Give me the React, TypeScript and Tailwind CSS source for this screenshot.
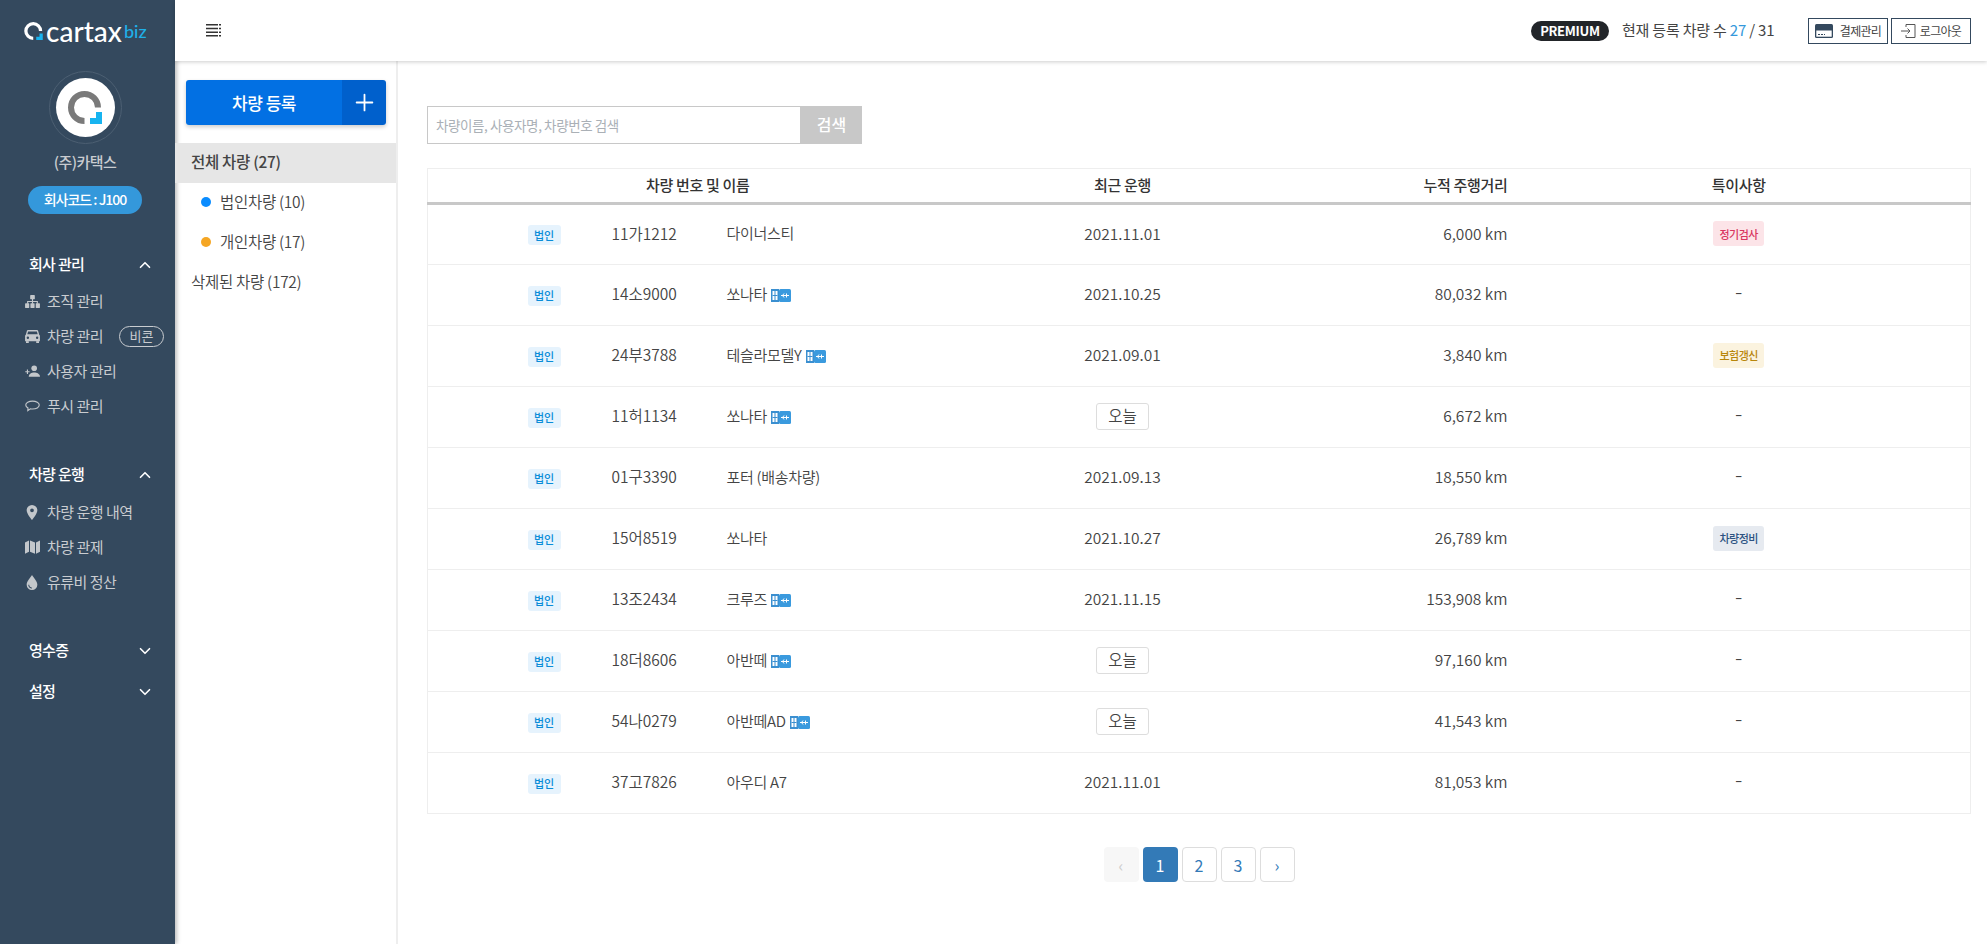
import type { ReactNode } from "react";
import { ChevronDown, ChevronUp, Plus } from "lucide-react";

const font = "font-['Noto_Sans_CJK_KR','Noto_Sans',sans-serif]";

interface Vehicle {
  plate: string;
  name: string;
  ev: boolean;
  date: string;
  km: string;
  note?: "inspect" | "insure" | "repair";
}

const vehicles: Vehicle[] = [
  { plate: "11가1212", name: "다이너스티", ev: false, date: "2021.11.01", km: "6,000 km", note: "inspect" },
  { plate: "14소9000", name: "쏘나타", ev: true, date: "2021.10.25", km: "80,032 km" },
  { plate: "24부3788", name: "테슬라모델Y", ev: true, date: "2021.09.01", km: "3,840 km", note: "insure" },
  { plate: "11허1134", name: "쏘나타", ev: true, date: "오늘", km: "6,672 km" },
  { plate: "01구3390", name: "포터 (배송차량)", ev: false, date: "2021.09.13", km: "18,550 km" },
  { plate: "15어8519", name: "쏘나타", ev: false, date: "2021.10.27", km: "26,789 km", note: "repair" },
  { plate: "13조2434", name: "크루즈", ev: true, date: "2021.11.15", km: "153,908 km" },
  { plate: "18더8606", name: "아반떼", ev: true, date: "오늘", km: "97,160 km" },
  { plate: "54나0279", name: "아반떼AD", ev: true, date: "오늘", km: "41,543 km" },
  { plate: "37고7826", name: "아우디 A7", ev: false, date: "2021.11.01", km: "81,053 km" },
];

function LogoMark({ className, ring }: { className: string; ring: string }) {
  return (
    <svg viewBox="0 0 34 33" className={className}>
      <path d="M30 16.5A13.5 13.5 0 1 0 16.500 30" fill="none" stroke={ring} strokeWidth="6" />
      <path d="M28 21h6v12H22v-6h6z" fill="#17b4f0" />
    </svg>
  );
}

function EvIcon() {
  return (
    <svg viewBox="0 0 20 13" className="ml-[4px] inline-block h-[13px] w-[20px] align-[-2px]">
      <rect x="0" y="0" width="8" height="13" fill="#3a8fd0" />
      <rect x="1.500" y="2" width="5" height="9" fill="#fff" />
      <path d="M1.500 6.500h5M4 2v9" stroke="#3a8fd0" strokeWidth="1" />
      <rect x="8" y="0" width="12" height="13" rx="1.500" fill="#3a9ade" />
      <path d="M10 6.500h8M13 4.500l-1.500 2 1.500 2M15.500 4.500v4" stroke="#fff" strokeWidth="1" fill="none" />
    </svg>
  );
}

const orgIcon = (
  <svg viewBox="0 0 16 14" className="h-[13px] w-[15px]" fill="#c3c7cb">
    <rect x="5.500" y="0" width="5" height="4.500" rx="0.500" />
    <rect x="0" y="9" width="4.500" height="5" rx="0.500" />
    <rect x="5.750" y="9" width="4.500" height="5" rx="0.500" />
    <rect x="11.500" y="9" width="4.500" height="5" rx="0.500" />
    <path d="M7.400 4h1.200v2.400h5.200v3h-1.200V7.600H8.600v1.800H7.400V7.600H3.400v1.800H2.200v-3h5.200z" />
  </svg>
);

const carIcon = (
  <svg viewBox="0 0 16 14" className="h-[13px] w-[15px]" fill="#c3c7cb">
    <path
      d="M3.200 0h9.600c.6 0 1 .3 1.200.9L15.200 5c.5.3.8.8.8 1.400V12H0V6.400C0 5.800.3 5.300.8 5L2 .9C2.200.3 2.600 0 3.200 0zM3.300 1.500 2.400 4.700h11.200l-.9-3.200zM3 7a1.300 1.300 0 1 0 0 2.600A1.300 1.300 0 0 0 3 7zm10 0a1.300 1.300 0 1 0 0 2.600A1.300 1.300 0 0 0 13 7z"
      fillRule="evenodd"
    />
    <rect x="1" y="12" width="3" height="2" />
    <rect x="12" y="12" width="3" height="2" />
  </svg>
);

const userIcon = (
  <svg viewBox="0 0 16 12" className="h-[12px] w-[15px]" fill="#c3c7cb">
    <circle cx="9.800" cy="3" r="3" />
    <path d="M4 12c0-2.800 3-4.400 5.800-4.400S16 9.200 16 12z" />
    <path d="M2 4.500h1.200v1.700h1.700v1.200H3.200v1.700H2V7.400H.3V6.200H2z" />
  </svg>
);

const chatIcon = (
  <svg viewBox="0 0 16 12" className="h-[12px] w-[15px]" fill="none" stroke="#c3c7cb" strokeWidth="1.200">
    <path d="M8 .8c4 0 7.200 1.700 7.200 4.200S12 9.200 8 9.200c-.8 0-1.500 0-2.200-.2L3 11l.2-2.900C1.700 7.400.8 6.300.8 5 .8 2.500 4 .8 8 .8z" />
  </svg>
);

const pinIcon = (
  <svg viewBox="0 0 12 16" className="h-[15px] w-[12px]" fill="#c3c7cb">
    <path
      d="M6 0a5.700 5.700 0 0 0-5.700 5.700C.3 9.700 6 16 6 16s5.700-6.300 5.700-10.300A5.700 5.700 0 0 0 6 0zm0 7.700a2 2 0 1 1 0-4 2 2 0 0 1 0 4z"
      fillRule="evenodd"
    />
  </svg>
);

const mapIcon = (
  <svg viewBox="0 0 15 14" className="h-[14px] w-[15px]" fill="#c3c7cb">
    <path d="M0 2.500 4 .5v11.200l-4 2zM5 .5l5 2v11.200l-5-2zM11 2.500l4-2v11.200l-4 2z" />
  </svg>
);

const dropIcon = (
  <svg viewBox="0 0 12 16" className="h-[15px] w-[12px]" fill="#c3c7cb">
    <path
      d="M6 0C4.500 2.800.3 6.300.3 10.300a5.700 5.700 0 0 0 11.400 0C11.700 6.300 7.500 2.800 6 0zM3 10.500c0 1.700 1.300 3 3 3v1c-2.300 0-4-1.800-4-4z"
      fillRule="evenodd"
    />
  </svg>
);

function NavGroup({ title, open }: { title: string; open: boolean }) {
  return (
    <div className="flex h-[20px] items-center justify-between pl-[29px] pr-[21px] text-[15px] font-medium text-white">
      <span className="tracking-[-0.7px]">{title}</span>
      {open ? <ChevronUp size={18} strokeWidth={2.200} /> : <ChevronDown size={18} strokeWidth={2.200} />}
    </div>
  );
}

function NavItem({ icon, label, children }: { icon: ReactNode; label: string; children?: ReactNode }) {
  return (
    <div className="flex h-[35px] items-center text-[15px] text-[#c9ccd0]">
      <span className="flex w-[47px] justify-center pl-[17px]">{icon}</span>
      <span className="tracking-[-0.5px]">{label}</span>
      {children}
    </div>
  );
}

function Sidebar() {
  return (
    <aside className="flex w-[175px] shrink-0 flex-col bg-[#34495e] shadow-[2px_0_4px_rgba(0,0,0,0.25)]">
      <div className="flex h-[61px] items-center pl-[24px]">
        <LogoMark className="h-[18px] w-[19px]" ring="#ffffff" />
        <span className="ml-[3px] font-['Lato',sans-serif] text-[28px] leading-none font-medium text-white">cartax</span>
        <span className="ml-[2px] font-['Lato',sans-serif] text-[18px] leading-none font-medium text-[#1fb0e8]">biz</span>
      </div>
      <div className="mt-[10px] flex flex-col items-center pr-[5px]">
        <div className="flex h-[73px] w-[73px] items-center justify-center rounded-full border border-[#4c5f72]">
          <div className="flex h-[59px] w-[59px] items-center justify-center rounded-full bg-white">
            <LogoMark className="h-[33px] w-[34px]" ring="#7a7a7a" />
          </div>
        </div>
        <div className="mt-[7px] text-[15px] font-medium tracking-[-0.6px] text-[#c9ccd0]">(주)카택스</div>
        <div className="mt-[12px] flex h-[28px] w-[114px] items-center justify-center rounded-full bg-[#3498db] text-[14px] font-medium tracking-[-1px] text-white">
          회사코드 : J100
        </div>
      </div>
      <div className="mt-[41px]">
        <NavGroup title="회사 관리" open />
        <div className="mt-[9px]">
          <NavItem icon={orgIcon} label="조직 관리" />
          <NavItem icon={carIcon} label="차량 관리">
            <span className="ml-[16px] flex h-[21px] w-[45px] items-center justify-center rounded-full border border-[#c9ccd0] text-[13px]">비콘</span>
          </NavItem>
          <NavItem icon={userIcon} label="사용자 관리" />
          <NavItem icon={chatIcon} label="푸시 관리" />
        </div>
      </div>
      <div className="mt-[41px]">
        <NavGroup title="차량 운행" open />
        <div className="mt-[10px]">
          <NavItem icon={pinIcon} label="차량 운행 내역" />
          <NavItem icon={mapIcon} label="차량 관제" />
          <NavItem icon={dropIcon} label="유류비 정산" />
        </div>
      </div>
      <div className="mt-[41px]">
        <NavGroup title="영수증" open={false} />
      </div>
      <div className="mt-[21px]">
        <NavGroup title="설정" open={false} />
      </div>
    </aside>
  );
}

function Header() {
  return (
    <header className="relative z-10 flex h-[61px] items-center justify-between bg-white pl-[31px] pr-[16px] shadow-[0_1px_4px_rgba(0,0,0,0.2)]">
      <svg viewBox="0 0 15 13" className="h-[13px] w-[15px]" fill="#333">
        <path d="M0 0h12v1.500H0zM13 0h2v1.500h-2zM0 3.700h12v1.500H0zM13 3.700h2v1.500h-2zM0 7.400h12v1.500H0zM13 7.400h2v1.500h-2zM0 11.100h12v1.500H0zM13 11.100h2v1.500h-2z" />
      </svg>
      <div className="flex items-center">
        <span className="flex h-[20px] w-[78px] items-center justify-center rounded-full bg-[#222529] text-[13px] font-bold tracking-[-0.3px] text-white">PREMIUM</span>
        <span className="ml-[13px] w-[151px] text-[15px] tracking-[-0.2px] whitespace-nowrap text-[#444]">
          현재 등록 차량 수 <span className="text-[#3498db]">27</span> / 31
        </span>
        <button className="ml-[35px] flex h-[26px] w-[80px] items-center justify-center gap-[7px] border border-[#34495e] text-[12px] tracking-[-0.7px] text-[#444]">
          <svg viewBox="0 0 18 14" className="h-[14px] w-[18px]">
            <rect width="18" height="14" rx="1.500" fill="#34495e" />
            <rect x="1.300" y="6.500" width="15.400" height="6.200" fill="#fff" />
            <path d="M3 10.500h2M6 10.500h2M9 10.500h1" stroke="#34495e" />
          </svg>
          결제관리
        </button>
        <button className="ml-[3px] flex h-[26px] w-[80px] items-center justify-center gap-[4px] border border-[#34495e] text-[12px] tracking-[-0.7px] text-[#444]">
          <svg viewBox="0 0 15 14" className="h-[14px] w-[15px]" fill="none" stroke="#555">
            <path d="M5 3V.5h9v13H5V11M0 7h9M6.500 4.500 9 7l-2.500 2.500" />
          </svg>
          로그아웃
        </button>
      </div>
    </header>
  );
}

function FilterPanel() {
  return (
    <div className="w-[223px] shrink-0 border-r-2 border-[#eeeeee] text-[15.5px] font-[350] tracking-[-0.3px] text-[#444]">
      <div className="mx-[11px] mt-[19px] flex h-[45px] w-[200px] overflow-hidden rounded-[3px] shadow-[0_2px_4px_rgba(0,0,0,0.2)]">
        <div className="flex flex-1 items-center justify-center bg-[#0270e3] text-[17px] font-medium tracking-[-0.5px] text-white">차량 등록</div>
        <div className="flex w-[44px] items-center justify-center bg-[#0060cc] text-white">
          <Plus size={27} strokeWidth={1.600} />
        </div>
      </div>
      <div className="mt-[18px] flex h-[40px] items-center bg-[#e6e6e6] pb-[2px] pl-[16px] font-medium">전체 차량 (27)</div>
      <div className="flex h-[40px] items-center pb-[2px] pl-[26px]">
        <span className="mr-[9px] h-[10px] w-[10px] rounded-full bg-[#0a8cff]" />법인차량 (10)
      </div>
      <div className="flex h-[40px] items-center pb-[2px] pl-[26px]">
        <span className="mr-[9px] h-[10px] w-[10px] rounded-full bg-[#f5a623]" />개인차량 (17)
      </div>
      <div className="flex h-[40px] items-center pb-[2px] pl-[16px]">삭제된 차량 (172)</div>
    </div>
  );
}

function NoteCell({ note }: { note?: Vehicle["note"] }) {
  if (note === "inspect") {
    return <span className="inline-flex h-[25px] w-[51px] items-center justify-center rounded-[3px] bg-[#fce4e8] text-[11px] font-medium tracking-[-0.5px] text-[#d9365f]">정기검사</span>;
  }
  if (note === "insure") {
    return <span className="inline-flex h-[25px] w-[51px] items-center justify-center rounded-[3px] bg-[#fbf3df] text-[11px] font-medium tracking-[-0.5px] text-[#b8860b]">보험갱신</span>;
  }
  if (note === "repair") {
    return <span className="inline-flex h-[25px] w-[51px] items-center justify-center rounded-[3px] bg-[#e6eaf0] text-[11px] font-medium tracking-[-0.5px] text-[#2c5282]">차량정비</span>;
  }
  return <span className="relative -top-[2px] text-[22px] leading-none font-light">-</span>;
}

function VehicleTable() {
  return (
    <table className="w-[1544px] table-fixed border-x border-t border-[#eeeeee] text-[15.5px] font-[350] text-[#444]">
      <colgroup>
        <col className="w-[184px]" />
        <col className="w-[115px]" />
        <col className="w-[243px]" />
        <col className="w-[306px]" />
        <col className="w-[232px]" />
        <col />
      </colgroup>
      <thead>
        <tr className="h-[35px] border-b-[3px] border-[#c8c8c8] text-[15px] text-[#333]">
          <th colSpan={3} className="pr-[2px] font-medium tracking-[-0.3px]">차량 번호 및 이름</th>
          <th className="font-medium tracking-[-0.3px]">최근 운행</th>
          <th className="text-right font-medium tracking-[-0.3px]">누적 주행거리</th>
          <th className="font-medium tracking-[-0.3px]">특이사항</th>
        </tr>
      </thead>
      <tbody>
        {vehicles.map((vehicle) => (
          <tr key={vehicle.plate} className="h-[61px] border-b border-[#eeeeee]">
            <td className="pb-[2px] pr-[51px] text-right">
              <span className="inline-flex h-[20px] w-[33px] items-center justify-center rounded-[3px] bg-[#e6f3fd] text-[11px] font-medium text-[#0a8cd8]">법인</span>
            </td>
            <td className="pb-[2px]">{vehicle.plate}</td>
            <td className="pb-[2px] text-[15px] tracking-[-0.3px]">
              {vehicle.name}
              {vehicle.ev ? <EvIcon /> : null}
            </td>
            <td className="pb-[2px] text-center">
              {vehicle.date === "오늘" ? (
                <span className="inline-flex h-[27px] w-[53px] items-center justify-center rounded-[3px] border border-[#dddddd]">오늘</span>
              ) : (
                vehicle.date
              )}
            </td>
            <td className="pb-[2px] text-right">{vehicle.km}</td>
            <td className="pb-[2px] text-center">
              <NoteCell note={vehicle.note} />
            </td>
          </tr>
        ))}
      </tbody>
    </table>
  );
}

function Pagination() {
  return (
    <div className="mt-[33px] flex justify-center gap-[4px] text-[16px] text-[#337ab7]">
      <span className="flex h-[35px] w-[35px] items-center justify-center rounded-[4px] bg-[#f7f7f7] text-[#cccccc]">‹</span>
      <span className="flex h-[35px] w-[35px] items-center justify-center rounded-[4px] bg-[#337ab7] text-white">1</span>
      <span className="flex h-[35px] w-[35px] items-center justify-center rounded-[4px] border border-[#dddddd]">2</span>
      <span className="flex h-[35px] w-[35px] items-center justify-center rounded-[4px] border border-[#dddddd]">3</span>
      <span className="flex h-[35px] w-[35px] items-center justify-center rounded-[4px] border border-[#dddddd]">›</span>
    </div>
  );
}

export default function App() {
  return (
    <div className={`flex h-[944px] w-[1987px] overflow-hidden bg-white ${font}`}>
      <Sidebar />
      <div className="flex min-w-0 flex-1 flex-col">
        <Header />
        <div className="flex flex-1">
          <FilterPanel />
          <main className="min-w-0 flex-1 pl-[29px] pr-[16px] pt-[45px]">
            <div className="flex h-[38px] w-[435px]">
              <div className="flex flex-1 items-center border border-[#c8c8c8] pl-[8px] text-[13.5px] tracking-[-0.4px] text-[#aab0b6]">차량이름, 사용자명, 차량번호 검색</div>
              <div className="flex w-[61px] items-center justify-center bg-[#c8c8c8] pb-[2px] text-[16px] font-medium text-white">검색</div>
            </div>
            <div className="mt-[24px]">
              <VehicleTable />
            </div>
            <Pagination />
          </main>
        </div>
      </div>
    </div>
  );
}
